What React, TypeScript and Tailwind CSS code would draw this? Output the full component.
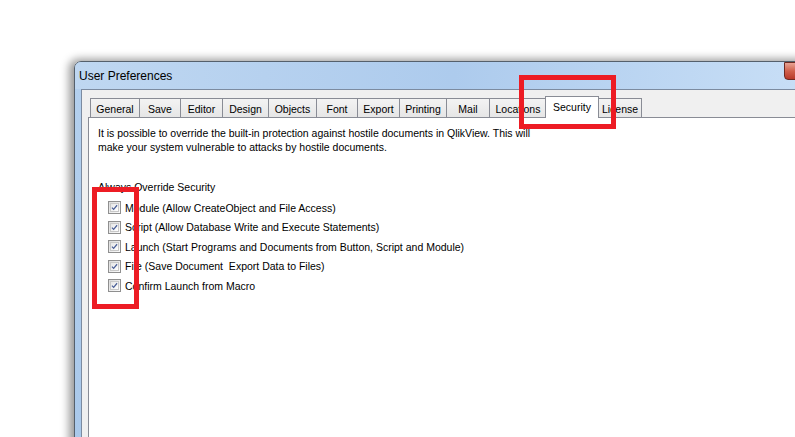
const tabs = [
  { label: 'General', w: 'w-[50px]' },
  { label: 'Save', w: 'w-[42px]' },
  { label: 'Editor', w: 'w-[43px]' },
  { label: 'Design', w: 'w-[47px]' },
  { label: 'Objects', w: 'w-[49px]' },
  { label: 'Font', w: 'w-[42px]' },
  { label: 'Export', w: 'w-[43px]' },
  { label: 'Printing', w: 'w-[48px]' },
  { label: 'Mail', w: 'w-[44px]' },
  { label: 'Locations', w: 'w-[58px]' },
  { label: 'Security', w: 'w-[54px]', active: true },
  { label: 'License', w: 'w-[44px]' },
];

const options = [
  'Module (Allow CreateObject and File Access)',
  'Script (Allow Database Write and Execute Statements)',
  'Launch (Start Programs and Documents from Button, Script and Module)',
  'File (Save Document  Export Data to Files)',
  'Confirm Launch from Macro',
];

function CheckBox() {
  return (
    <div className="w-[13px] h-[13px] border border-[#8f8f8f] bg-gradient-to-br from-[#dcdcdc] to-[#fbfbfb] p-px shrink-0">
      <div className="w-full h-full border border-[#c8c8c8] bg-gradient-to-br from-[#e6e6e6] to-white flex items-center justify-center">
        <svg width="9" height="9" viewBox="0 0 9 9">
          <path d="M1.2 4.6 L3.4 6.9 L7.8 1.6" fill="none" stroke="#4a5f97" strokeWidth="1.6" />
        </svg>
      </div>
    </div>
  );
}

export default function App() {
  return (
    <div
      className="relative w-[795px] h-[437px] overflow-hidden bg-white text-black"
      style={{ fontFamily: '"Liberation Sans", Arial, sans-serif' }}
    >
      {/* dialog window */}
      <div className="absolute left-[74px] top-[61px] w-[760px] h-[400px] rounded-t-[7px] border border-[#55606c] bg-gradient-to-b from-[#b4d0ee] to-[#a9c8ea] shadow-[-3px_0_9px_2px_rgba(0,0,0,0.4)] flex flex-col">
        <div className="h-[27px] flex items-center pl-[4px] text-[12px] rounded-t-[6px] bg-gradient-to-r from-[#bfd7f1] via-[#adcbed] to-[#cae0f7]">
          User Preferences
        </div>
        <div className="absolute left-[709px] top-0 w-[45px] h-[18px] rounded-b-[4px] border border-[#6e2a22] bg-gradient-to-b from-[#e7a394] via-[#d0604c] to-[#b8382a]" />

        <div className="ml-[6px] flex-1 border-t border-l border-[#7c8ba0] bg-[#f0f0f0] pl-[6px] pt-[6px] flex flex-col text-[10.5px]">
          <div className="flex items-end pl-[2px] h-[21px]">
            {tabs.map((t) =>
              t.active ? (
                <div
                  key={t.label}
                  className={`${t.w} relative z-10 -mx-px h-[22px] -mb-px bg-white border-t border-l border-r border-[#898c95] flex justify-center pt-[3px]`}
                >
                  {t.label}
                </div>
              ) : (
                <div
                  key={t.label}
                  className={`${t.w} -mr-px h-[19px] bg-gradient-to-b from-[#f3f3f3] to-[#e6e6e6] border-t border-l border-r border-[#898c95] flex justify-center pt-[3px]`}
                >
                  {t.label}
                </div>
              )
            )}
          </div>
          <div className="flex-1 border-t border-l border-[#898c95] bg-white pl-[9px] pt-[8px] leading-[14px]">
            <p>It is possible to override the built-in protection against hostile documents in QlikView. This will</p>
            <p>make your system vulnerable to attacks by hostile documents.</p>
            <p className="mt-[26px]">Always Override Security</p>
            <div className="mt-[4px] pl-[10px] flex flex-col">
              {options.map((o) => (
                <div key={o} className="h-[19.5px] flex items-center gap-[4px]">
                  <CheckBox />
                  <span className="whitespace-pre">{o}</span>
                </div>
              ))}
            </div>
          </div>
        </div>
      </div>

      {/* red annotation boxes */}
      <div className="absolute left-[519px] top-[75px] w-[97px] h-[54px] border-[5px] border-[#ed1c24]" />
      <div className="absolute left-[92px] top-[187px] w-[47px] h-[122px] border-[5px] border-[#ed1c24]" />
    </div>
  );
}
